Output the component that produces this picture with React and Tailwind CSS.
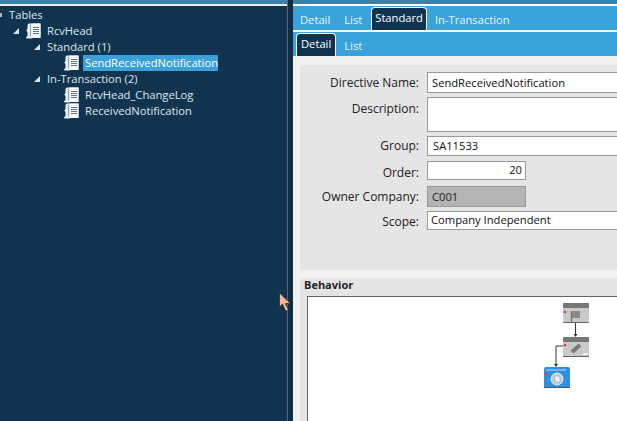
import React from "react";

function ScrollIcon() {
  return (
    <svg width="15" height="16" viewBox="0 0 15 16" className="shrink-0">
      <path d="M3 .500h11.500V15H6v.500H1.500C.500 15.500 0 15 0 14c1 0 1.500-.7 1.500-2V9.500C1.500 8.500.500 8.500.500 7.500s1-1 1-2V3C1.500 1.500 2 .500 3 .500z" fill="#e8edf1" />
      <path d="M5.500 .500h9V15h-9z" fill="#f7f9fa" />
      <path d="M4.500 1.500v12" stroke="#8c9fae" strokeWidth="1" />
      <path d="M7 4.500h6M7 6.500h6M7 8.500h6M7 10.500h6" stroke="#5a7388" strokeWidth="1.100" />
    </svg>
  );
}

function Twisty() {
  return (
    <svg width="8" height="8" viewBox="0 0 8 8" className="shrink-0">
      <path d="M7 1v6H1z" fill="#dbe3e9" />
    </svg>
  );
}

function TreeRow({ indent, twisty, icon, label, selected }) {
  return (
    <div className="flex h-4 items-center" style={{ paddingLeft: indent }}>
      {twisty && <span className="mr-[6px] flex w-2 justify-center"><Twisty /></span>}
      {icon && <span className="mr-[6px]"><ScrollIcon /></span>}
      <span className={selected ? "-ml-[2px] bg-[#3aa0d8] pl-[2px] text-white" : "text-[#dfe6eb]"}>{label}</span>
    </div>
  );
}

function Tab({ label, active, className }) {
  return active ? (
    <div className={`flex h-[23px] items-start rounded-t-[4px] border border-b-0 border-white bg-[#10344f] pt-[2px] text-white ${className}`}>{label}</div>
  ) : (
    <div className={`flex h-[23px] items-center pt-[3px] text-[#eaf5fb] ${className}`}>{label}</div>
  );
}

function FormRow({ label, labelPad, children, mb }) {
  return (
    <div className={`flex ${mb}`}>
      <div className={`w-[127px] shrink-0 pr-2 text-right text-[12px] text-[#222] ${labelPad}`}>{label}</div>
      {children}
    </div>
  );
}

function Flow() {
  return (
    <svg width="70" height="90" viewBox="0 0 70 90" className="shrink-0 blur-[0.4px]">
      <rect x="20" y="1" width="26" height="20" rx="2" fill="#c9c9c9" />
      <rect x="20" y="1" width="26" height="5" rx="1" fill="#777" />
      <path d="M20 20.500h26" stroke="#666" />
      <path d="M28.500 9v11" stroke="#777" strokeWidth="1.500" />
      <path d="M29 9h8v7h-8z" fill="#8a8a8a" />
      <circle cx="22" cy="10" r="1.300" fill="#e53935" />
      <path d="M32.500 21v12" stroke="#333" />
      <path d="M30.500 32h4l-2 3z" fill="#333" />
      <rect x="20" y="35" width="26" height="20" rx="2" fill="#c9c9c9" />
      <rect x="20" y="35" width="26" height="5" rx="1" fill="#777" />
      <path d="M20 54.500h26" stroke="#666" />
      <path d="M29 50l8-7" stroke="#777" strokeWidth="4" />
      <path d="M40 52h5" stroke="#f2f2f2" strokeWidth="2" />
      <circle cx="22" cy="43" r="1.300" fill="#e53935" />
      <path d="M20 44h-7v19" stroke="#333" fill="none" />
      <path d="M11 62h4l-2 3z" fill="#333" />
      <rect x="1" y="65" width="26" height="21" rx="2" fill="#2e8fe0" />
      <path d="M1 85.500h26" stroke="#555" />
      <path d="M3 68h20" stroke="#bcdcf5" />
      <circle cx="14" cy="77" r="6" fill="#b9cfe2" stroke="#e8f0f6" />
      <path d="M12 74h3l2 2v4h-5z" fill="#eef3f7" stroke="#7f97aa" strokeWidth="0.500" />
      <circle cx="3" cy="72" r="1.300" fill="#e53935" />
    </svg>
  );
}

export default function App() {
  return (
    <div className="relative flex h-[421px] w-[617px] overflow-hidden bg-[#10344f] text-[11.2px] leading-4" style={{ fontFamily: '"Open Sans", "Liberation Sans", sans-serif' }}>
      <div className="flex w-[287px] shrink-0 flex-col">
        <div className="h-[4px] bg-[#3a82ae]" />
        <div className="h-[2px] bg-[#e8e8e8]" />
        <div className="flex flex-col pt-[1px]">
          <div className="flex h-4 items-center">
            <span className="mr-[7px] h-1 w-[2px] bg-[#aab6c0]" />
            <span className="text-[#dfe6eb]">Tables</span>
          </div>
          <TreeRow indent={12} twisty icon label="RcvHead" />
          <TreeRow indent={33} twisty label="Standard (1)" />
          <TreeRow indent={64} icon label="SendReceivedNotification" selected />
          <TreeRow indent={33} twisty label="In-Transaction (2)" />
          <TreeRow indent={64} icon label="RcvHead_ChangeLog" />
          <TreeRow indent={64} icon label="ReceivedNotification" />
        </div>
      </div>
      <div className="w-px shrink-0 bg-[#5a6570]" />
      <div className="w-[5px] shrink-0 bg-[#0f2d44]" />
      <div className="flex min-w-0 flex-1 flex-col bg-[#f1f1f1]">
        <div className="h-[4px] bg-[#3a82ae]" />
        <div className="h-[2px] bg-white" />
        <div className="flex h-6 items-end bg-[#3aa3dc] pl-[7px]">
          <Tab label="Detail" />
          <Tab label="List" className="ml-[14px]" />
          <Tab label="Standard" active className="ml-[9px] px-[3px]" />
          <Tab label="In-Transaction" className="ml-[8px]" />
        </div>
        <div className="h-[2px] bg-white" />
        <div className="flex h-6 items-end bg-[#3aa3dc] pl-[3px]">
          <Tab label="Detail" active className="px-[4px]" />
          <Tab label="List" className="ml-[8px]" />
        </div>
        <div className="flex flex-1 flex-col gap-2 pl-[7px] pt-[9px]">
          <div className="flex h-[205px] flex-col rounded-l-[4px] bg-[#e5e5e5] pt-[7px]">
            <FormRow label="Directive Name:" labelPad="pt-[3px]" mb="mb-[4px]">
              <div className="h-[21px] flex-1 border border-r-0 border-[#9a9a9a] bg-white pl-[4px] pt-[2px] text-[#111]">SendReceivedNotification</div>
            </FormRow>
            <FormRow label="Description:" labelPad="pt-[4px]" mb="mb-[4px]">
              <div className="h-[35px] flex-1 border border-r-0 border-[#9a9a9a] bg-white" />
            </FormRow>
            <FormRow label="Group:" labelPad="pt-[2px]" mb="mb-[5px]">
              <div className="h-5 flex-1 border border-r-0 border-[#9a9a9a] bg-white pl-[5px] pt-[1px] text-[#111]">SA11533</div>
            </FormRow>
            <FormRow label="Order:" labelPad="pt-[4px]" mb="mb-[5px]">
              <div className="h-[19px] w-[99px] border border-[#9a9a9a] bg-white pr-[3px] text-right text-[#111]">20</div>
            </FormRow>
            <FormRow label="Owner Company:" labelPad="pt-[3px]" mb="mb-[4px]">
              <div className="h-[21px] w-[99px] border border-[#9a9a9a] bg-[#b4b4b4] pl-[4px] pt-[2px] text-[#222]">C001</div>
            </FormRow>
            <FormRow label="Scope:" labelPad="pt-[3px]" mb="">
              <div className="h-[19px] flex-1 border border-r-0 border-[#9a9a9a] bg-white pl-[3px] text-[#111]">Company Independent</div>
            </FormRow>
          </div>
          <div className="flex min-h-0 flex-1 flex-col rounded-tl-[4px] bg-[#e5e5e5] pl-[4px]">
            <div className="-mt-px h-[19px] text-[11px] font-bold text-[#222]">Behavior</div>
            <div className="ml-[3px] flex flex-1 justify-end border-l border-t border-[#666] bg-white pr-[4px] pt-[5px]">
              <Flow />
            </div>
          </div>
        </div>
      </div>
      <svg width="12" height="20" viewBox="0 0 12 20" className="absolute left-[279px] top-[292px]">
        <path d="M.5 1v14l3-3 3 7 3-1-3-6.500h5z" fill="#f2b49a" stroke="#33291f" strokeWidth="0.800" />
      </svg>
    </div>
  );
}
